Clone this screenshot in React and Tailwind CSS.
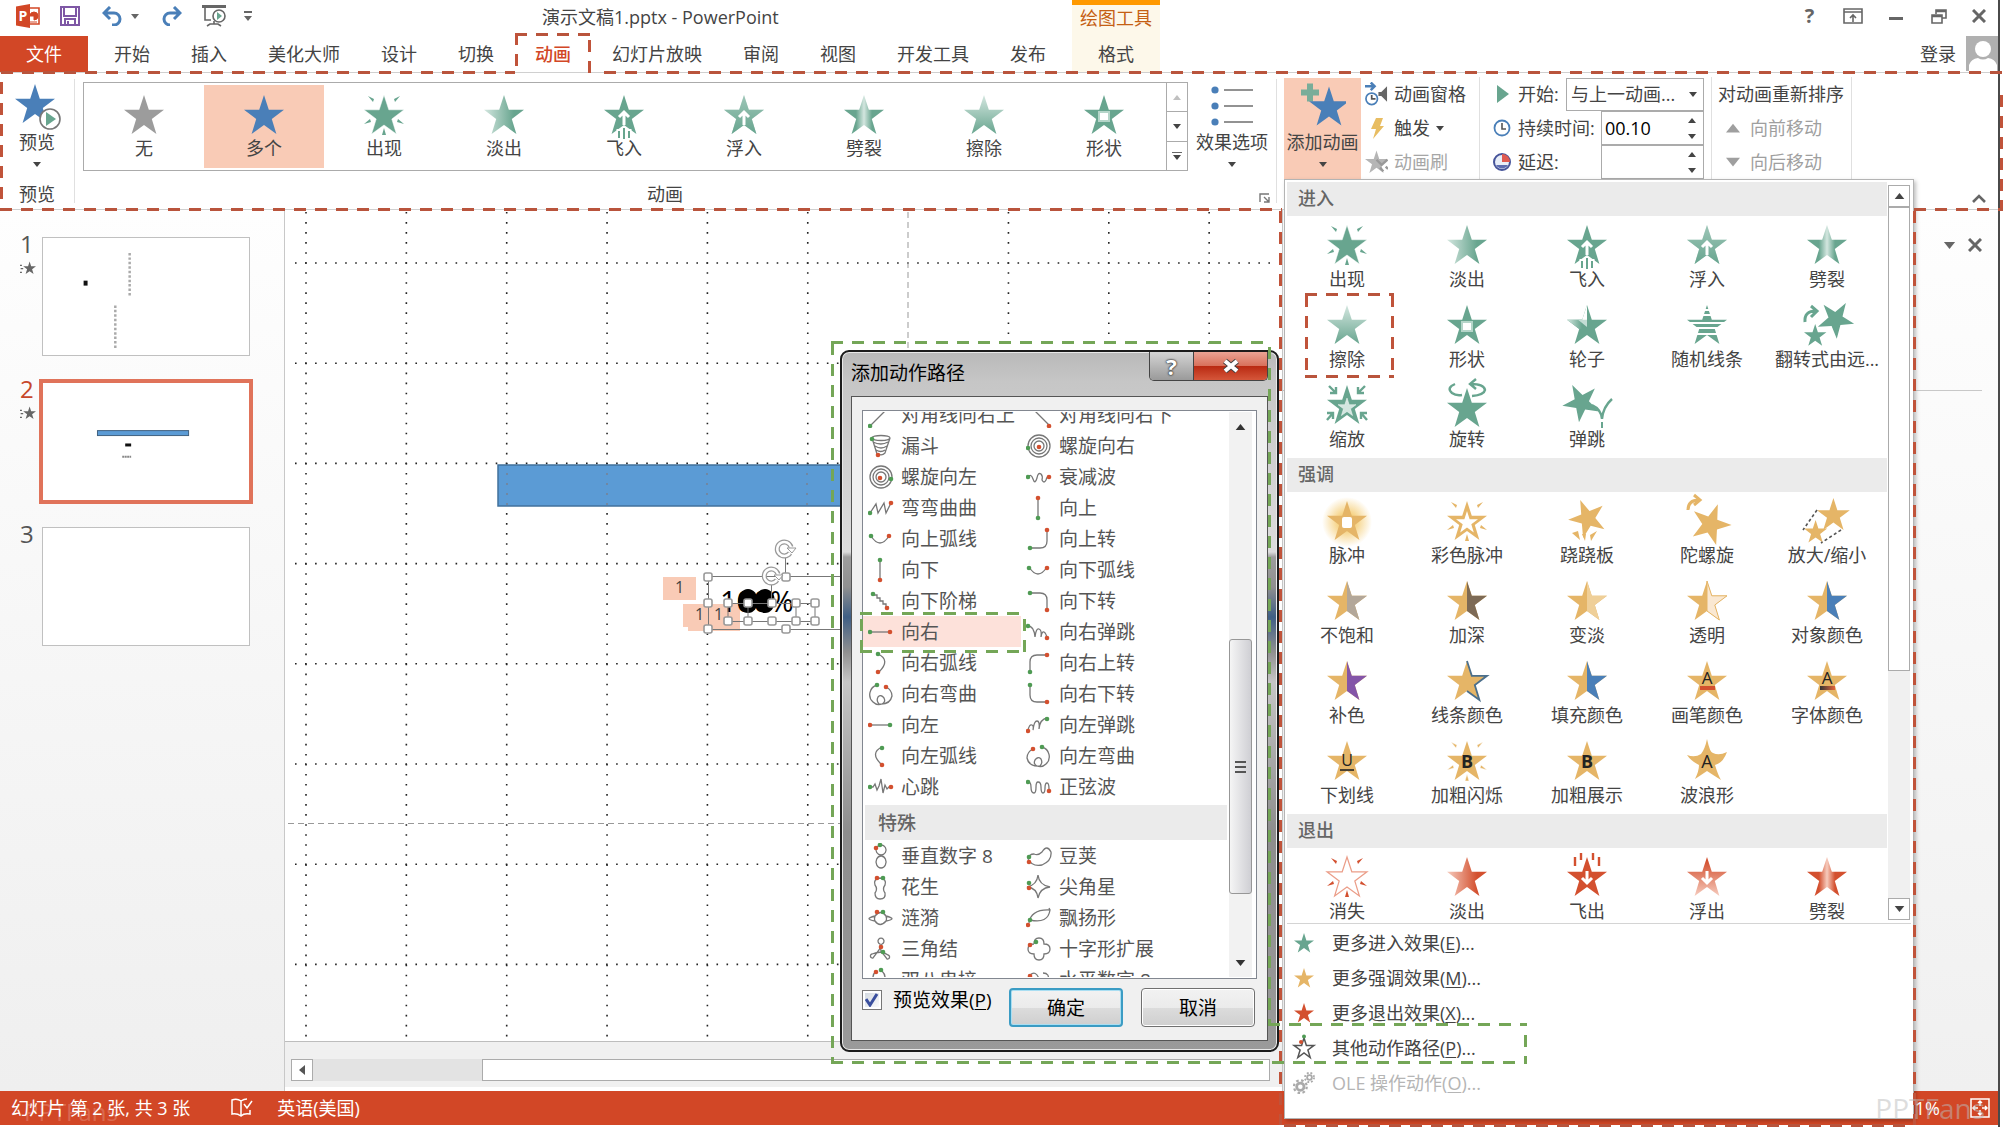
import { useState } from "react"
import { clsx } from "clsx"

const STAR = "M20 0 L24.8 14.8 L40 14.8 L27.8 24 L32.4 39 L20 30 L7.6 39 L12.2 24 L0 14.8 L15.2 14.8 Z"
const RIGHT_HALF = "M20 0 L24.8 14.8 L40 14.8 L27.8 24 L32.4 39 L20 30 Z"

const GREEN = "#68a58f"
const GOLD = "#e5b567"
const RED = "#d3502f"
const BLUE = "#4a7fb8"

const tabs = ["开始", "插入", "美化大师", "设计", "切换", "动画", "幻灯片放映", "审阅", "视图", "开发工具", "发布"]

const galleryItems = [
  { name: "无", kind: "plain", color: "#9c9c9c" },
  { name: "多个", kind: "plain", color: BLUE },
  { name: "出现", kind: "appear", color: GREEN },
  { name: "淡出", kind: "fade", color: GREEN },
  { name: "飞入", kind: "fly", color: GREEN },
  { name: "浮入", kind: "float", color: GREEN },
  { name: "劈裂", kind: "split", color: GREEN },
  { name: "擦除", kind: "wipe", color: GREEN },
  { name: "形状", kind: "shape", color: GREEN },
]

const menuSections = [
  {
    title: "进入",
    color: GREEN,
    items: [
      ["出现", "appear"],
      ["淡出", "fade"],
      ["飞入", "fly"],
      ["浮入", "float"],
      ["劈裂", "split"],
      ["擦除", "wipe"],
      ["形状", "shape"],
      ["轮子", "wheel"],
      ["随机线条", "bars"],
      ["翻转式由远...", "growTurn"],
      ["缩放", "zoom"],
      ["旋转", "swivel"],
      ["弹跳", "bounce"],
    ],
  },
  {
    title: "强调",
    color: GOLD,
    items: [
      ["脉冲", "pulse"],
      ["彩色脉冲", "colorPulse"],
      ["跷跷板", "teeter"],
      ["陀螺旋", "spin"],
      ["放大/缩小", "grow"],
      ["不饱和", "half", "#b3a799"],
      ["加深", "half", "#7d6a55"],
      ["变淡", "half", "#efcf98"],
      ["透明", "half", "#fae8d2"],
      ["对象颜色", "half", BLUE],
      ["补色", "half", "#8455a8"],
      ["线条颜色", "lineColor"],
      ["填充颜色", "half", BLUE],
      ["画笔颜色", "brush", "#d3502f"],
      ["字体颜色", "brush", "url(#g-font)"],
      ["下划线", "underline"],
      ["加粗闪烁", "boldFlash"],
      ["加粗展示", "bold"],
      ["波浪形", "wave"],
    ],
  },
  {
    title: "退出",
    color: RED,
    items: [
      ["消失", "vanish"],
      ["淡出", "fadeOut"],
      ["飞出", "flyOut"],
      ["浮出", "floatOut"],
      ["劈裂", "splitOut"],
    ],
  },
]

const menuCommands = [
  { label: "更多进入效果", hotkey: "E", color: GREEN },
  { label: "更多强调效果", hotkey: "M", color: GOLD },
  { label: "更多退出效果", hotkey: "X", color: RED },
  { label: "其他动作路径", hotkey: "P", outline: true },
  { label: "OLE 操作动作", hotkey: "O", disabled: true },
]

const rings = "M2 13a11 11 0 1 1 22 0a11 11 0 1 1 -22 0 M5 13a8 8 0 1 1 16 0a8 8 0 1 1 -16 0 M8 13a5 5 0 1 1 10 0a5 5 0 1 1 -10 0"

// d: path outline, g: start point (green), r: end point (red)
const basicPaths = [
  { name: "对角线向右上", d: "M2 24 L24 2", g: [2, 24], r: [24, 2] },
  { name: "对角线向右下", d: "M2 2 L24 24", g: [2, 2], r: [23, 24] },
  { name: "漏斗", d: "M4 5a9 2.500 0 1 0 18 0a9 2.500 0 1 0 -18 0 M5 9q8 4 15 0 M7 13q6 4 12 0 M8 17q5 3 9 0 M4 5l5 16 M22 5l-5 15q-3 3 -7 1", g: [4, 6], r: [10, 22] },
  { name: "螺旋向右", d: rings, g: [2, 15], r: [13, 14] },
  { name: "螺旋向左", d: rings, g: [23, 15], r: [12, 14] },
  { name: "衰减波", d: "M2 13q3 -4 5 2q2 6 4 -1q1 -6 4 -4q2 2 1 6q2 4 4 0q1 -4 3 -3", g: [2, 13], r: [23, 13] },
  { name: "弯弯曲曲", d: "M2 18 L8 9 L10 18 L16 8 L18 18 L23 8", g: [2, 18], r: [23, 8] },
  { name: "向上", d: "M12 24V3", g: [12, 23], r: [12, 3] },
  { name: "向上弧线", d: "M3 10q9 14 18 0", g: [3, 10], r: [21, 10] },
  { name: "向上转", d: "M4 22h10q7 0 7 -7V4", g: [4, 22], r: [21, 4] },
  { name: "向下", d: "M12 3v20", g: [12, 3], r: [12, 23] },
  { name: "向下弧线", d: "M3 10q9 14 18 0", g: [3, 11], r: [21, 11] },
  { name: "向下阶梯", d: "M5 7h4v3h3v3h3v3h3v3h2v2", g: [5, 6], r: [19, 20] },
  { name: "向下转", d: "M4 5h10q7 0 7 7v10", g: [4, 5], r: [21, 22] },
  { name: "向右", d: "M2 13h21", g: [2, 13], r: [22, 13] },
  { name: "向右弹跳", d: "M2 7q6 0 7 11q1 -9 4 -8q3 1 2 8q1 -6 3 -5q2 1 3 6", g: [2, 7], r: [21, 19] },
  { name: "向右弧线", d: "M10 4q13 6 1 18", g: [10, 4], r: [10, 22] },
  { name: "向右上转", d: "M4 22V12q0 -7 7 -7h10", g: [4, 22], r: [21, 5] },
  { name: "向右弯曲", d: "M9 4A10 10 0 0 0 5 21Q9 25 14 23Q18 21 16 17Q13 13 10 16Q8 20 11 23Q22 24 24 15Q24 9 18 6", g: [9, 4], r: [18, 6] },
  { name: "向右下转", d: "M4 4v10q0 7 7 7h10", g: [4, 4], r: [21, 21] },
  { name: "向左", d: "M2 13h21", g: [22, 13], r: [2, 13] },
  { name: "向左弹跳", d: "M2 19q1 -7 4 -6q2 1 1 5q1 -9 4 -9q3 0 2 8q1 -10 8 -11", g: [21, 7], r: [2, 19] },
  { name: "向左弧线", d: "M14 4q-13 6 0 18", g: [14, 5], r: [14, 22] },
  { name: "向左弯曲", d: "M16 4A10 10 0 0 1 20 21Q16 25 11 23Q7 21 9 17Q12 13 15 16Q17 20 14 23Q3 24 1 15Q1 9 7 6", g: [16, 4], r: [7, 6] },
  { name: "心跳", d: "M2 13h3l2 -3l2 6l2 -4l2 -7l2 14l2 -8l2 4l2 -2h3", g: [2, 13], r: [23, 13] },
  { name: "正弦波", d: "M2 8q3 0 3 5q0 6 3 6q2 0 2 -6q0 -5 2 -5q3 0 3 5q0 6 2 6q2 0 2 -5q0 -5 2 -5q2 0 2 6", g: [2, 8], r: [23, 17] },
]

const specialPaths = [
  { name: "垂直数字 8", d: "M13 2a5 5 0 1 0 .1 0 M13 13a5 6 0 1 0 .1 0", g: [12, 2], r: [8, 5] },
  { name: "豆荚", d: "M2 16q4 8 14 6q10 -4 9 -13q-4 -8 -9 0q-4 4 -8 2q-5 0 -6 5", g: [3, 14], r: [3, 19] },
  { name: "花生", d: "M12 4q-7 1 -5 7q3 4 0 8q0 6 5 6q6 0 5 -6q-3 -4 0 -8q2 -6 -5 -7", g: [15, 4], r: [9, 4] },
  { name: "尖角星", d: "M12 1q1 10 12 12q-10 1 -12 11q-1 -10 -11 -11q10 -2 11 -12", g: [3, 9], r: [3, 14] },
  { name: "涟漪", d: "M7 11q-12 3 0 5q5 7 11 0q12 -2 0 -5q-5 -7 -11 0q-1 3 0 5 M18 11q1 3 0 5", g: [15, 7], r: [9, 7] },
  { name: "飘扬形", d: "M3 18q2 -14 21 -13q-2 14 -20 10 M24 5l-1 -2", g: [4, 15], r: [2, 20] },
  { name: "三角结", d: "M12 8a3 3 0 1 1 2 0l-3 6l-6 8a2 2 0 1 1 -1 -4q10 -4 16 1a2 2 0 1 1 -1 4l-6 -8z", g: [15, 16], r: [13, 11] },
  { name: "十字形扩展", d: "M8 8q0 -6 5 -6t5 6q6 0 6 5t-6 5q0 6 -5 6t-5 -6q-6 0 -6 -5t6 -5", g: [10, 6], r: [4, 9] },
  { name: "双八串接", d: "M8 4q-6 6 0 12q6 6 0 9 M14 4q6 6 0 12", g: [13, 3], r: [8, 5] },
  { name: "水平数字 8", d: "M4 8q6 -5 9 4q3 8 9 2q2 -8 -5 -8", g: [4, 15], r: [4, 9] },
]

const rays = "M4 1l5 6l1 -3z M36 1l-5 6l-1 -3z M0 29l6 -5l1 3z M40 29l-6 -5l-1 3z M20 33l-2 7h4z"
const arrowUp = "M20 30V18 M15 22l5 -5l5 5"

function GradientDefs() {
  const sets = [
    ["green", "#68a58f", "#d3e6df"],
    ["red", "#d3502f", "#f6cbbd"],
  ]
  return (
    <svg width="0" height="0" className="absolute" aria-hidden="true">
      <defs>
        {sets.map(([id, dark, light]) => (
          <g key={id}>
            <linearGradient id={`g-${id}-h`}>
              <stop offset="0" stopColor={light} />
              <stop offset="0.75" stopColor={dark} />
            </linearGradient>
            <linearGradient id={`g-${id}-v`} x2="0" y2="1">
              <stop offset="0" stopColor={light} />
              <stop offset="1" stopColor={dark} />
            </linearGradient>
            <linearGradient id={`g-${id}-vr`} x2="0" y2="1">
              <stop offset="0.1" stopColor={dark} />
              <stop offset="1" stopColor={light} />
            </linearGradient>
            <linearGradient id={`g-${id}-s`}>
              <stop offset="0.3" stopColor={dark} />
              <stop offset="0.5" stopColor={light} />
              <stop offset="0.7" stopColor={dark} />
            </linearGradient>
          </g>
        ))}
        <linearGradient id="g-font">
          <stop offset="0" stopColor="#333" />
          <stop offset="1" stopColor="#e2653c" />
        </linearGradient>
        <radialGradient id="g-glow">
          <stop offset="0.3" stopColor="#f5cf7a" />
          <stop offset="1" stopColor="#f5cf7a" stopOpacity="0" />
        </radialGradient>
      </defs>
    </svg>
  )
}

function Letter({ children, bold, y = 27, size = 19 }) {
  return (
    <text x="20" y={y} textAnchor="middle" fontSize={size} fontWeight={bold ? 700 : 400} fill="#222" fontFamily="Open Sans, sans-serif">
      {children}
    </text>
  )
}

function EffectIcon({ kind, color, extra }) {
  const art = {
    plain: <path d={STAR} fill={color} />,
    appear: (
      <>
        <path d={STAR} fill={color} stroke="#fff" strokeWidth="0.5" />
        <path d={rays} fill={color} />
      </>
    ),
    fade: <path d={STAR} fill="url(#g-green-h)" />,
    fly: (
      <>
        <path d={STAR} fill={color} />
        <path d={arrowUp} stroke="#fff" strokeWidth="3" fill="none" />
        <path d="M20 32v11 M15 34v8 M25 34v8" stroke="#fff" strokeWidth="5" />
        <path d="M20 33v11 M15 36v7 M25 36v7" stroke={color} strokeWidth="2" />
      </>
    ),
    float: (
      <>
        <path d={STAR} fill="url(#g-green-v)" />
        <path d={STAR} fill={color} opacity="0.5" />
        <path d={arrowUp} stroke="#fff" strokeWidth="3" fill="none" />
      </>
    ),
    split: <path d={STAR} fill="url(#g-green-s)" />,
    wipe: <path d={STAR} fill="url(#g-green-v)" />,
    shape: (
      <>
        <path d={STAR} fill={color} />
        <rect x="15" y="17" width="10" height="9" fill="#fff" stroke="#b5d5c9" strokeWidth="2" />
      </>
    ),
    wheel: (
      <>
        <path d={STAR} fill={color} />
        <path d="M20 0V22L11 15L15.2 14.8Z" fill="#fff" />
        <path d="M0 14.8H15L20 17V23L12.2 24Z" fill="url(#g-green-h)" />
        <path d="M11 14.8H20V22Z" fill="#c4ddd4" />
      </>
    ),
    bars: (
      <>
        <path d={STAR} fill={color} />
        <path d="M0 5h40 M0 10h40 M0 18h40 M0 23h40 M0 29h40" stroke="#fff" strokeWidth="1.8" />
      </>
    ),
    growTurn: (
      <>
        <path d={STAR} fill={color} transform="translate(10 -4) rotate(32 20 20) scale(.9)" />
        <path d={STAR} fill={color} transform="translate(-3 19) scale(.56)" />
        <path d="M-2 17q-1 -11 11 -11 M4 1l6 5l-6 6" stroke={color} strokeWidth="3" fill="none" />
      </>
    ),
    zoom: (
      <>
        <path d={STAR} fill={color} />
        <path d={STAR} fill="#d3e6df" stroke="#fff" transform="translate(11 13) scale(.45)" />
        <path d="M2 1l7 7 M9 2v6H3 M38 1l-7 7 M31 2v6h6 M0 35l6 -7 M0 28h6v6 M40 35l-6 -7 M40 28h-6v6" stroke={color} strokeWidth="2.4" fill="none" />
      </>
    ),
    swivel: (
      <>
        <path d={STAR} fill={color} transform="translate(0 3)" />
        <path d="M8 -1q-9 4 -3 9q4 3 10 2 M25 11q12 -1 13 -6q-1 -6 -14 -6 M29 -6l-6 5l6 5" stroke={color} strokeWidth="2.4" fill="none" />
      </>
    ),
    bounce: (
      <>
        <path d={STAR} fill={color} transform="translate(-4 -3) rotate(-28 20 20) scale(.92)" />
        <path d="M25 20q9 4 10 14q1 -12 10 -20" stroke={color} strokeWidth="2.4" fill="none" />
        <path d="M35 37v6" stroke={color} strokeWidth="2" />
      </>
    ),
    pulse: (
      <>
        <circle cx="20" cy="21" r="25" fill="url(#g-glow)" />
        <path d={STAR} fill={color} />
        <rect x="15" y="16" width="10" height="11" rx="2" fill="#fff" />
      </>
    ),
    colorPulse: (
      <>
        <path d={STAR} fill={color} />
        <path d={STAR} fill="#fff" transform="translate(9 10) scale(.55)" />
        <path d={rays} fill={color} />
      </>
    ),
    teeter: (
      <>
        <path d={STAR} fill={color} transform="translate(2 -3) rotate(-22 20 20) scale(.93)" />
        <path d="M5 32l8 7l-2 -9z M15 33l3 7l1 -7z M30 30l-6 10l-1 -6z" fill={color} />
      </>
    ),
    spin: (
      <>
        <path d={STAR} fill={color} transform="translate(4 2) rotate(20 20 20)" />
        <path d="M1 9q0 -10 11 -10 M7 -6l6 5l-6 5" stroke={color} strokeWidth="3" fill="none" />
      </>
    ),
    grow: (
      <>
        <path d={STAR} fill={color} transform="translate(10 -3) scale(.82)" />
        <path d={STAR} fill={color} transform="translate(-3 19) scale(.58)" />
        <path d="M10 9L-4 29 M34 29L14 42" stroke="#555" strokeWidth="1.6" strokeDasharray="3 2.5" />
      </>
    ),
    half: (
      <>
        <path d={STAR} fill={color} />
        <path d={RIGHT_HALF} fill={extra} stroke={extra === "#fae8d2" ? color : "none"} />
      </>
    ),
    lineColor: (
      <>
        <path d={STAR} fill={color} />
        <path d="M20 0L24.8 14.8H40L27.8 24L32.4 39L20 30" fill="none" stroke="#4b6f8c" strokeWidth="1.8" />
      </>
    ),
    brush: (
      <>
        <path d={STAR} fill={color} />
        <Letter y={23} size={17}>A</Letter>
        <rect x="13" y="25" width="15" height="4" fill={extra} />
      </>
    ),
    underline: (
      <>
        <path d={STAR} fill={color} />
        <Letter y={25} size={16}>U</Letter>
        <path d="M13 29h14" stroke="#222" strokeWidth="1.6" />
      </>
    ),
    boldFlash: (
      <>
        <path d={STAR} fill={color} />
        <path d={rays} fill={color} stroke="#fff" strokeWidth="0.5" />
        <Letter bold size={18}>B</Letter>
      </>
    ),
    bold: (
      <>
        <path d={STAR} fill={color} />
        <Letter bold size={18}>B</Letter>
      </>
    ),
    wave: (
      <>
        <path d="M20 -2Q23 12 26 12Q32 15 40 11Q36 22 28 24Q31 34 34 39Q26 34 20 30L8 38Q12 30 12 24Q4 20 0 14Q8 17 14 13Q18 8 20 -2Z" fill={color} />
        <Letter size={18}>A</Letter>
      </>
    ),
    vanish: (
      <>
        <path d={STAR} fill="#fff" stroke="#eb9d88" strokeWidth="1.2" />
        <path d={rays} fill={color} />
      </>
    ),
    fadeOut: <path d={STAR} fill="url(#g-red-h)" />,
    flyOut: (
      <>
        <path d={STAR} fill={color} />
        <path d="M20 14v11 M15 21l5 5l5 -5" stroke="#fff" strokeWidth="3" fill="none" />
        <path d="M8 0v9 M14 -4v7 M26 -4v7 M32 0v9" stroke={color} strokeWidth="2.4" />
      </>
    ),
    floatOut: (
      <>
        <path d={STAR} fill="url(#g-red-vr)" />
        <path d="M20 14v11 M15 21l5 5l5 -5" stroke="#fff" strokeWidth="3" fill="none" />
      </>
    ),
    splitOut: <path d={STAR} fill="url(#g-red-s)" />,
  }
  return (
    <svg viewBox="0 0 40 40" className="size-10 overflow-visible" aria-hidden="true">
      {art[kind]}
    </svg>
  )
}

function Caret({ up, className }) {
  return (
    <svg viewBox="0 0 8 5" className={clsx("h-[5px] w-2", className)} fill="currentColor" aria-hidden="true">
      <path d={up ? "M0 5L4 0L8 5Z" : "M0 0H8L4 5Z"} />
    </svg>
  )
}

// Dashed marker lines, drawn over the window
function DashH({ green, className }) {
  return (
    <i
      className={clsx(
        "pointer-events-none absolute h-[3px]",
        green
          ? "bg-[repeating-linear-gradient(90deg,#74a657_0_12px,transparent_12px_21px)]"
          : "bg-[repeating-linear-gradient(90deg,#b9543c_0_12px,transparent_12px_21px)]",
        className
      )}
    />
  )
}

function DashV({ green, className }) {
  return (
    <i
      className={clsx(
        "pointer-events-none absolute w-[3px]",
        green
          ? "bg-[repeating-linear-gradient(180deg,#74a657_0_12px,transparent_12px_21px)]"
          : "bg-[repeating-linear-gradient(180deg,#c0533a_0_12px,transparent_12px_21px)]",
        className
      )}
    />
  )
}

function TitleBar() {
  return (
    <div className="flex h-9 items-start">
      <div className="flex h-8 items-center pl-4 text-[#4a7fb8]">
        <svg viewBox="0 0 24 24" className="size-6" aria-hidden="true">
          <path d="M11 4h12v16H11z" fill="#fff" stroke="#d24726" strokeWidth="1.6" />
          <path d="M14 12a4 4 0 1 1 4 4v-4z M13 18h8" fill="#d24726" stroke="#d24726" />
          <path d="M0 2.5L14 0v24L0 21.5z" fill="#d24726" />
          <text x="2.5" y="17" fontSize="14" fontWeight="700" fill="#fff" fontFamily="Open Sans, sans-serif">P</text>
        </svg>
        <button aria-label="保存" className="ml-5">
          <svg viewBox="0 0 20 20" className="size-5" fill="none" stroke="#7e57a5" strokeWidth="2">
            <path d="M1 1h18v18H1z M4 1v9h12V1 M5 19v-6h10v6 M8 15v4" />
          </svg>
        </button>
        <button aria-label="撤消" className="ml-[22px]">
          <svg viewBox="0 0 22 20" className="h-5 w-[22px]" fill="none" stroke="currentColor" strokeWidth="3">
            <path d="M3 7h9a6 6 0 0 1 0 12h-2 M8 1L2 7l6 6" />
          </svg>
        </button>
        <Caret className="ml-[7px] text-[#666]" />
        <button aria-label="恢复" className="ml-[21px]">
          <svg viewBox="0 0 22 20" className="h-5 w-[22px]" fill="none" stroke="currentColor" strokeWidth="3">
            <path d="M19 7h-9a6 6 0 0 0 0 12 M14 1l6 6l-6 6" />
          </svg>
        </button>
        <button aria-label="从头开始" className="ml-5">
          <svg viewBox="0 0 24 22" className="h-[22px] w-6" fill="none" stroke="#666" strokeWidth="1.6">
            <path d="M0 1.5h24" strokeWidth="3" />
            <path d="M3 3v12h6 M12 16v3 M5 21l3 -2h8l3 2" />
            <circle cx="17" cy="11" r="6" fill="#fff" />
            <path d="M15 7l5 4l-5 4z" fill="#68a58f" stroke="none" />
          </svg>
        </button>
        <button aria-label="自定义快速访问工具栏" className="ml-[18px] text-[#666]">
          <svg viewBox="0 0 8 10" className="h-[10px] w-2" fill="currentColor">
            <path d="M0 0h8v2H0z M0 5h8L4 10z" />
          </svg>
        </button>
      </div>
      <h1 className="ml-[290px] text-[18px] leading-[34px] text-[#444]">演示文稿1.pptx - PowerPoint</h1>
      <div className="ml-auto flex h-8 text-[#666]">
        <button aria-label="帮助" className="w-[43px] text-[20px] leading-8 font-bold">?</button>
        <button aria-label="功能区显示选项" className="grid w-[43px] place-items-center">
          <svg viewBox="0 0 20 16" className="h-4 w-5" fill="none" stroke="currentColor" strokeWidth="1.6">
            <path d="M1 1h18v14H1z M1 4h18 M10 14V7 M7 10l3 -3l3 3" />
          </svg>
        </button>
        <button aria-label="最小化" className="grid w-[43px] place-items-center">
          <span className="mt-1 h-[3px] w-[14px] bg-[#666]" />
        </button>
        <button aria-label="还原" className="grid w-[43px] place-items-center">
          <svg viewBox="0 0 16 15" className="h-[15px] w-4" fill="none" stroke="currentColor" strokeWidth="1.6">
            <path d="M5 5V1h10v8h-4 M5 2.5h10 M1 6h10v8H1z M1 7.5h10" />
          </svg>
        </button>
        <button aria-label="关闭" className="grid w-[38px] place-items-center">
          <svg viewBox="0 0 14 14" className="size-[14px]" stroke="currentColor" strokeWidth="3">
            <path d="M1 1L13 13M13 1L1 13" />
          </svg>
        </button>
      </div>
    </div>
  )
}

function TabBar() {
  return (
    <nav className="flex h-[37px] border-b border-[#d0d0d0] text-[18px] leading-[34px] text-[#444]">
      <button className="w-[88px] bg-[#d24726] text-white">文件</button>
      <div className="flex gap-px pl-[6px]">
        {tabs.map((tab) =>
          tab === "动画" ? (
            <button key={tab} className="relative px-5 font-medium text-[#d24726]">
              {tab}
              <DashH className="top-[-3px] left-0 w-[78px]" />
              <DashV className="top-[-3px] left-0 h-10" />
              <DashV className="top-[4px] right-0 h-9" />
            </button>
          ) : (
            <button key={tab} className="px-5">
              {tab}
            </button>
          )
        )}
      </div>
      <button className="relative ml-[6px] w-[88px] bg-[#fdf8ea]">
        <span className="absolute -top-9 left-0 h-9 w-full border-t-[5px] border-[#ff9900] bg-[#fdf8ea] leading-[27px] text-[#c55f14]">
          绘图工具
        </span>
        格式
      </button>
      <button className="ml-auto pr-[10px]">登录</button>
      <svg viewBox="0 0 32 35" className="h-[35px] w-8" aria-label="账户">
        <path d="M0 0h32v35H0z" fill="#b0b0b0" />
        <circle cx="17" cy="13" r="8" fill="#fff" />
        <path d="M3 35v-6q2 -6 9 -7q5 3 10 0q7 1 9 7v6z" fill="#fff" />
      </svg>
    </nav>
  )
}

function Ribbon() {
  return (
    <section className="flex h-[137px] border-b border-[#d0d0d0] bg-white text-[18px] leading-6 text-[#444]">
      <div className="my-[6px] flex w-[75px] flex-col border-r border-[#e0e0e0] text-center">
        <button className="flex h-[94px] flex-col items-center pt-[5px]">
          <svg viewBox="0 0 46 46" className="ml-[2px] h-[46px] w-[46px]" aria-hidden="true">
            <path d={STAR} fill={BLUE} />
            <circle cx="35" cy="35" r="10" fill="#fff" stroke="#777" strokeWidth="1.6" />
            <path d="M31 28l10 7l-10 7z" fill={GREEN} />
          </svg>
          <span>预览</span>
          <Caret className="mt-[8px]" />
        </button>
        <span className="mt-auto leading-[18px]">预览</span>
      </div>

      <div className="my-[6px] flex flex-col border-r border-[#e0e0e0] pr-[3px] pl-2">
        <div className="flex">
          <div className="mt-[3px] flex h-[89px] border border-[#ababab]">
            {galleryItems.map((item) => (
              <button
                key={item.name}
                className={clsx("my-[2px] flex w-[120px] flex-col items-center pt-[10px]", item.name === "多个" && "bg-[#f9cbb6]")}
              >
                <EffectIcon kind={item.kind} color={item.color} />
                <span className="mt-px">{item.name}</span>
              </button>
            ))}
            <div className="ml-[2px] flex w-[21px] flex-col border-l border-[#ababab]">
              <button aria-label="上一行" className="grid flex-1 place-items-center border-b border-[#ababab] text-[#c0c0c0]"><Caret up /></button>
              <button aria-label="下一行" className="grid flex-1 place-items-center border-b border-[#ababab]"><Caret /></button>
              <button aria-label="其他" className="flex flex-1 flex-col items-center justify-center gap-[2px]">
                <i className="h-px w-[10px] bg-[#666]" />
                <Caret />
              </button>
            </div>
          </div>
          <button className="ml-[3px] flex w-[82px] flex-col items-center pt-[5px]">
            <svg viewBox="0 0 42 42" className="h-[46px] w-[42px]" aria-hidden="true">
              {[4, 20, 36].map((y) => (
                <g key={y}>
                  <circle cx="4" cy={y} r="3.6" fill={BLUE} />
                  <path d={`M13 ${y}h29`} stroke="#777" strokeWidth="1.6" />
                </g>
              ))}
            </svg>
            <span>效果选项</span>
            <Caret className="mt-[8px]" />
          </button>
        </div>
        <div className="mt-auto flex items-end leading-[18px]">
          <span className="flex-1 pr-3 text-center">动画</span>
          <button aria-label="动画选项" className="mr-[3px]">
            <svg viewBox="0 0 11 10" className="h-[10px] w-[11px]" fill="none" stroke="#777" strokeWidth="1.4">
              <path d="M1 9V1h9 M5 4l5 5 M10 4v5H5" />
            </svg>
          </button>
        </div>
      </div>

      <div className="relative mt-[5px] ml-[7px] h-[101px]">
        <button className="flex h-full w-[77px] flex-col items-center bg-[#f9cbb6] pt-[5px]">
          <svg viewBox="0 0 46 46" className="h-[47px] w-[46px]" aria-hidden="true">
            <path d="M7 0h6v6h6v6h-6v6H7v-6H1V6h6z" fill="#79ad99" />
            <path d={STAR} fill={BLUE} transform="translate(9 3)" />
          </svg>
          <span>添加动画</span>
          <Caret className="mt-[8px]" />
        </button>
        <AnimationMenu />
      </div>

      <div className="my-1 flex h-[102px] w-[119px] flex-col border-r border-[#e0e0e0] pl-1">
        <button className="flex h-[34px] items-center gap-[6px]">
          <svg viewBox="0 0 24 24" className="h-6 w-[23px]" fill="none" stroke={BLUE} strokeWidth="1.8" aria-hidden="true">
            <path d="M0 4h8 M6 0l4 4l-4 4" strokeWidth="2.6" />
            <circle cx="7" cy="17" r="6" fill="#fff" />
            <path d="M7 13v4h4" stroke="#555" />
            <path d="M14 10h3l6 -6v16l-6 -6h-3z" fill="#666" stroke="none" />
          </svg>
          动画窗格
        </button>
        <button className="flex h-[34px] items-center gap-[6px]">
          <svg viewBox="0 0 23 24" className="h-6 w-[23px]" fill="#e8bd62" aria-hidden="true">
            <path d="M11 2h7l-3 8h4L8 23l3 -10H6z" />
          </svg>
          触发 <Caret />
        </button>
        <button disabled className="flex h-[34px] items-center gap-[6px] text-[#a6a6a6]">
          <svg viewBox="0 0 40 40" className="h-6 w-[23px]" aria-hidden="true">
            <path d={STAR} fill="#b5b5b5" />
            <path d="M20 16l9 9l10 -9 M26 30l6 6 M36 28l4 4" stroke="#999" strokeWidth="4" fill="none" />
          </svg>
          动画刷
        </button>
      </div>

      <div className="my-1 flex h-[102px] w-[232px] flex-col border-r border-[#e0e0e0] pr-[7px] pl-[13px]">
        <div className="flex h-[34px] items-center">
          <svg viewBox="0 0 18 18" className="size-[18px]" aria-hidden="true"><path d="M4 0l12 9l-12 9z" fill={GREEN} /></svg>
          <label htmlFor="start" className="ml-[7px]">开始:</label>
          <div className="relative ml-auto">
            <select id="start" className="h-[33px] w-[138px] appearance-none border border-[#ababab] bg-white pl-1 text-[18px] leading-6">
              <option>与上一动画...</option>
            </select>
            <Caret className="absolute top-[14px] right-[7px]" />
          </div>
        </div>
        <div className="flex h-[34px] items-center">
          <svg viewBox="0 0 18 18" className="size-[18px]" fill="none" aria-hidden="true">
            <circle cx="9" cy="9" r="7.5" stroke={BLUE} strokeWidth="1.8" />
            <path d="M9 4v6h4" stroke="#555" strokeWidth="1.6" />
          </svg>
          <label htmlFor="duration" className="ml-[7px]">持续时间:</label>
          <Spinner id="duration" value="00.10" />
        </div>
        <div className="flex h-[34px] items-center">
          <svg viewBox="0 0 18 18" className="size-[18px]" aria-hidden="true">
            <circle cx="9" cy="9" r="8" fill="#e8eef8" stroke="#46549a" strokeWidth="2" />
            <path d="M9 9V1a8 8 0 0 1 8 8z" fill="#e05a50" />
            <path d="M3 12a7 7 0 0 0 12 0z" fill="#5d6cb0" />
          </svg>
          <label htmlFor="delay" className="ml-[7px]">延迟:</label>
          <Spinner id="delay" value="" />
        </div>
      </div>

      <div className="my-1 flex h-[102px] w-[140px] flex-col border-r border-[#e0e0e0] pl-[6px]">
        <span className="leading-[34px]">对动画重新排序</span>
        <button disabled className="flex h-[34px] items-center gap-[10px] pl-2 text-[#9f9f9f]">
          <Caret up className="h-[10px]! w-[14px]!" />向前移动
        </button>
        <button disabled className="flex h-[34px] items-center gap-[10px] pl-2 text-[#9f9f9f]">
          <Caret className="h-[10px]! w-[14px]!" />向后移动
        </button>
      </div>

      <button aria-label="折叠功能区" className="mt-auto mr-3 mb-[6px] ml-auto">
        <svg viewBox="0 0 14 9" className="h-[9px] w-[14px]" fill="none" stroke="#666" strokeWidth="2.6">
          <path d="M1 8l6 -6l6 6" />
        </svg>
      </button>
    </section>
  )
}

function Spinner({ id, value }) {
  const [text, setText] = useState(value)
  return (
    <div className="ml-auto flex h-[34px] w-[103px] border border-[#ababab]">
      <input id={id} value={text} onChange={(e) => setText(e.target.value)} className="w-20 pl-[3px] text-[18px] text-black outline-none" />
      <div className="flex flex-col">
        <button aria-label="增加" className="grid h-4 w-5 place-items-center"><Caret up /></button>
        <button aria-label="减少" className="grid h-4 w-5 place-items-center"><Caret /></button>
      </div>
    </div>
  )
}

function AnimationMenu() {
  return (
    <div className="absolute top-full left-0 z-20 w-[630px] border border-[#b4b4b4] bg-white p-[2px] shadow-[2px_2px_4px_rgba(0,0,0,0.25)]">
      <div className="flex h-[742px] border-b border-[#d4d4d4]">
        <div className="w-[600px] overflow-hidden">
          {menuSections.map((section) => (
            <section key={section.title}>
              <h2 className="h-[34px] bg-[#ebebeb] pl-[11px] leading-8 font-medium text-[#666]">{section.title}</h2>
              <div className="grid grid-cols-5 py-px">
                {section.items.map(([name, kind, extra]) => (
                  <button key={name} className="relative flex h-20 flex-col items-center pt-2 whitespace-nowrap">
                    <EffectIcon kind={kind} color={section.color} extra={extra} />
                    <span className="mt-[2px]">{name}</span>
                    {name === "擦除" && (
                      <>
                        <DashH className="top-[-4px] left-[18px] w-[89px]" />
                        <DashH className="top-[78px] left-[18px] w-[89px]" />
                        <DashV className="top-[-2px] left-[18px] h-[82px]" />
                        <DashV className="top-[-2px] left-[104px] h-[82px]" />
                      </>
                    )}
                  </button>
                ))}
              </div>
            </section>
          ))}
        </div>
        <div className="my-[3px] ml-px flex w-[22px] flex-col bg-[#f0f0f0]">
          <button aria-label="向上滚动" className="grid h-[22px] place-items-center border border-[#ababab] bg-white">
            <Caret up className="h-[6px]! w-[11px]!" />
          </button>
          <div className="h-[464px] border border-[#ababab] bg-white" />
          <button aria-label="向下滚动" className="mt-auto grid h-[22px] place-items-center border border-[#ababab] bg-white">
            <Caret className="h-[6px]! w-[11px]!" />
          </button>
        </div>
      </div>
      <ul className="pt-px pb-4">
        {menuCommands.map((cmd) => (
          <li key={cmd.label}>
            <button disabled={cmd.disabled} className="flex h-[35px] w-full items-center gap-[17px] pl-[6px] disabled:text-[#b5b5b5]">
              {cmd.disabled ? (
                <svg viewBox="0 0 24 24" className="size-[22px]" fill="none" stroke="#aaa" aria-hidden="true">
                  <circle cx="8" cy="16" r="4" strokeWidth="3" />
                  <circle cx="8" cy="16" r="7" strokeWidth="2.4" strokeDasharray="2.8 2.7" />
                  <circle cx="18" cy="6" r="2.6" strokeWidth="2" />
                  <circle cx="18" cy="6" r="5" strokeWidth="2" strokeDasharray="2 2" />
                </svg>
              ) : (
                <svg viewBox="-2 -2 44 44" className="size-[22px] overflow-visible" aria-hidden="true">
                  <path d={STAR} fill={cmd.outline ? "#fff" : cmd.color} stroke={cmd.outline ? "#555" : "none"} strokeWidth="3" />
                  {cmd.outline && (
                    <>
                      <circle cx="20" cy="-3" r="4" fill="#4f9b54" />
                      <circle cx="14" cy="8" r="4" fill="#d3502f" />
                    </>
                  )}
                </svg>
              )}
              <span>{cmd.label}(<u className="underline-offset-2">{cmd.hotkey}</u>)...</span>
            </button>
          </li>
        ))}
      </ul>
    </div>
  )
}

function Thumbnail({ number, active, animated, children }) {
  return (
    <li className="flex">
      <div className={clsx("w-[42px] pl-5 text-[24px] leading-[14px]", active ? "text-[#c7472c]" : "text-[#555]")}>
        {number}
        {animated && (
          <svg viewBox="-10 0 50 40" className="mt-[10px] h-[14px] w-4 overflow-visible" fill="#666" aria-hidden="true">
            <path d={STAR} />
            <path d="M-10 10h6v4h-6z M-8 20h8v4h-8z M-10 32h6v4h-6z" />
          </svg>
        )}
      </div>
      <button
        aria-label={`幻灯片 ${number}`}
        className={clsx("relative h-[119px] w-[208px] border border-[#c0c0c0] bg-white", active && "outline-4 -outline-offset-1 outline-[#e0735a]")}
      >
        {children}
      </button>
    </li>
  )
}

function SlidePanel() {
  return (
    <aside className="w-[285px] border-r border-[#c8c8c8] bg-linear-to-b from-[#fefefe] to-[#efefef] pt-[27px]">
      <ol className="flex flex-col gap-[26px]">
        <Thumbnail number={1} animated>
          <svg viewBox="0 0 208 118" className="h-full w-full" aria-hidden="true">
            <rect x="41" y="43" width="4" height="5" fill="#111" />
            <path d="M87.500 15v43 M73 68v43" stroke="#aaa" strokeWidth="2.500" strokeDasharray="2.500 2" />
          </svg>
        </Thumbnail>
        <Thumbnail number={2} active animated>
          <svg viewBox="0 0 208 118" className="h-full w-full" aria-hidden="true">
            <rect x="55" y="48" width="92" height="5" fill="#5b9bd5" stroke="#41617f" />
            <rect x="83" y="61" width="6" height="3" fill="#111" />
            <path d="M80 74.500h9" stroke="#888" strokeWidth="2" strokeDasharray="2 .5" />
          </svg>
        </Thumbnail>
        <Thumbnail number={3} />
      </ol>
    </aside>
  )
}

function Handle({ x, y }) {
  return <rect x={x - 4} y={y - 4} width="8" height="8" rx="2" fill="#fff" stroke="#999" strokeWidth="1.6" />
}

function RotateHandle({ x, y }) {
  return (
    <g transform={`translate(${x} ${y})`} fill="none">
      <path d="M7 -2a7 7 0 1 0 -1 6" stroke="#999" strokeWidth="5" />
      <path d="M7 -2a7 7 0 1 0 -1 6" stroke="#fff" strokeWidth="2.500" />
      <path d="M3 -1h9l-4 5z" fill="#fff" stroke="#999" />
    </g>
  )
}

function SlideCanvas() {
  const columns = Array.from({ length: 10 }, (_, i) => 21 + i * 100.35)
  const rows = Array.from({ length: 8 }, (_, i) => 53 + i * 100.2)
  return (
    <svg className="h-full w-full" fontFamily="Open Sans, sans-serif" role="img" aria-label="幻灯片 2">
      <g stroke="#222" strokeWidth="1.600" strokeDasharray="1.600 8.435">
        {columns.map((x, i) => i !== 6 && <path key={x} d={`M${x} 2V832`} />)}
        {rows.map((y) => <path key={y} d={`M10 ${y}H990`} />)}
      </g>
      <path d="M623 2V832 M3 613.500H995" stroke="#999" strokeDasharray="6 4" />
      <rect x="213" y="255" width="700" height="41" fill="#5b9bd5" stroke="#41719c" strokeWidth="1.500" />
      <path d="M222 263V296 M322 263V296 M422 263V296 M522 263V296" stroke="#6f87a3" strokeWidth="2" strokeDasharray="2 8" />

      <g fill="#f9cbb6">
        <rect x="378" y="367" width="33" height="23" />
        <rect x="398" y="394" width="40" height="23" />
        <rect x="403" y="394" width="52" height="27" />
      </g>
      <g fontSize="16" fill="#444">
        <text x="390" y="383">1</text>
        <text x="410" y="410">1</text>
        <text x="429" y="410">1</text>
      </g>
      <text x="435" y="402" fontSize="29">100%</text>
      <ellipse cx="463" cy="391" rx="10" ry="12" />
      <ellipse cx="480" cy="391" rx="10" ry="12" />
      <g fill="none" stroke="#777">
        <path d="M560 366.500H423.500V419.500H560 M443 393.500H530V411.500H443Z M463 393.500V411.500 M511 393.500V411.500 M500.500 345V366 M486.500 372V393" />
      </g>
      {[[423, 367], [501, 367], [423, 393], [423, 419], [501, 419]].map(([x, y]) => <Handle key={`${x}-${y}`} x={x} y={y} />)}
      {[443, 463, 487, 511, 530].map((x) => (
        <g key={x}>
          <Handle x={x} y={393} />
          <Handle x={x} y={411} />
        </g>
      ))}
      <RotateHandle x={499} y={339} />
      <RotateHandle x={486} y={366} />
    </svg>
  )
}

function PathItem({ path, selected, onSelect }) {
  return (
    <button
      onClick={onSelect}
      className={clsx("relative flex h-[31px] items-center gap-[7px] pl-[5px] whitespace-nowrap", selected && "bg-[#fde1da]")}
    >
      <svg viewBox="0 0 26 26" className="size-[26px]" fill="none" aria-hidden="true">
        <path d={path.d} stroke="#777" strokeWidth="1.300" />
        <circle cx={path.g[0]} cy={path.g[1]} r="2.300" fill="#4f9b54" />
        <circle cx={path.r[0]} cy={path.r[1]} r="2.300" fill="#d3502f" />
      </svg>
      {path.name}
    </button>
  )
}

function MotionPathDialog() {
  const [selected, setSelected] = useState("向右")
  const [preview, setPreview] = useState(true)

  const renderPath = (path) => (
    <PathItem key={path.name} path={path} selected={selected === path.name} onSelect={() => setSelected(path.name)} />
  )

  return (
    <div
      role="dialog"
      aria-label="添加动作路径"
      className="absolute top-[350px] left-[840px] z-30 w-[439px] rounded-[9px] border-2 border-[#1c1c1c] bg-[linear-gradient(180deg,#b9b9b9_0,#c6c6c6_30px,#dcdcdc_200px,#9d9d9d_205px,#909090_235px,#3f5f85_265px,#909090_300px,#c5c5c5_330px,#8d8d8d_480px,#9a9a9a_100%)] px-[9px] pb-[9px] text-[19px] leading-6 text-[#555] shadow-[inset_0_0_0_1px_#e8e8e8]"
    >
      <div className="flex h-[44px] items-start">
        <h2 className="leading-[42px] text-black">添加动作路径</h2>
        <div className="ml-auto flex h-[29px] overflow-hidden rounded-b-[5px] border border-t-0 border-[#444]">
          <button aria-label="帮助" className="w-[44px] border-r border-[#444] bg-linear-to-b from-[#d5d5d5] to-[#9a9a9a] text-[22px] leading-[26px] font-bold text-white [text-shadow:0_0_2px_#222,0_0_2px_#222]">
            ?
          </button>
          <button aria-label="关闭" className="grid w-[73px] place-items-center bg-[linear-gradient(#e9a394_0,#d8705a_50%,#b92a12_51%,#d5563a_100%)]">
            <svg viewBox="0 0 18 16" className="h-4 w-[18px]">
              <path d="M3 3L15 13M15 3L3 13" stroke="#444" strokeWidth="6" />
              <path d="M3 3L15 13M15 3L3 13" stroke="#fff" strokeWidth="4" />
            </svg>
          </button>
        </div>
      </div>
      <div className="border border-[#555] bg-[#f0f0f0] px-[10px] py-[13px]">
        <div className="flex h-[569px] overflow-hidden border border-[#828790] bg-white py-px">
          <div className="flex-1 overflow-hidden">
            <div className="-mt-[13px] grid grid-cols-[158px_1fr]">{basicPaths.map(renderPath)}</div>
            <h3 className="mt-[3px] mr-[2px] ml-[2px] h-[35px] bg-[#ebebeb] pl-[13px] leading-[36px] font-medium text-[#666]">特殊</h3>
            <div className="grid grid-cols-[158px_1fr]">{specialPaths.map(renderPath)}</div>
          </div>
          <div className="mr-1 flex w-[23px] flex-col items-center bg-[#f2f2f2]">
            <button aria-label="向上滚动" className="h-[29px] text-[#333]"><Caret up className="h-[6px]! w-[11px]!" /></button>
            <div className="mt-[198px] flex h-[255px] w-full flex-col items-center justify-center gap-[3px] rounded-[3px] border border-[#979797] bg-linear-to-r from-[#f5f5f5] to-[#cfcfd4]">
              <i className="h-[2px] w-[11px] bg-[#555]" />
              <i className="h-[2px] w-[11px] bg-[#555]" />
              <i className="h-[2px] w-[11px] bg-[#555]" />
            </div>
            <button aria-label="向下滚动" className="mt-auto h-[28px] text-[#333]"><Caret className="h-[6px]! w-[11px]!" /></button>
          </div>
        </div>
        <div className="mt-[9px] flex pr-[2px] text-black">
          <label className="relative flex h-6 items-center gap-[11px]">
            <input
              type="checkbox"
              checked={preview}
              onChange={() => setPreview(!preview)}
              className="size-5 appearance-none border border-[#777] bg-linear-to-br from-[#cfd6de] to-white ring-2 ring-white ring-inset"
            />
            {preview && (
              <svg viewBox="0 0 14 14" className="pointer-events-none absolute top-[5px] left-[3px] size-[14px]" fill="none" stroke="#3a4f9e" strokeWidth="3">
                <path d="M1 6l4 6l7 -11" />
              </svg>
            )}
            <span>预览效果(<u className="underline-offset-2">P</u>)</span>
          </label>
          <button className="ml-auto h-[39px] w-[114px] rounded-[4px] border-2 border-[#3b9cc4] bg-[linear-gradient(#f2f2f2_0,#ebebeb_50%,#dcdcdc_51%,#cfcfcf_100%)] shadow-[inset_0_0_0_1px_#a9def2]">
            确定
          </button>
          <button className="ml-[18px] h-[39px] w-[114px] rounded-[4px] border border-[#707070] bg-[linear-gradient(#f2f2f2_0,#ebebeb_50%,#dcdcdc_51%,#cfcfcf_100%)] shadow-[inset_0_0_0_1px_#fff]">
            取消
          </button>
        </div>
      </div>
    </div>
  )
}

function AnimationPane() {
  return (
    <aside className="w-[716px] border-l border-[#c8c8c8] bg-linear-to-b from-[#fefefe] to-[#f0f0f0]">
      <div className="mr-4 flex h-[181px] justify-end gap-3 border-b border-[#c8c8c8] pt-[28px] text-[#666]">
        <button aria-label="任务窗格选项" className="h-[14px]"><Caret className="h-[7px]! w-[13px]!" /></button>
        <button aria-label="关闭窗格" className="h-[14px]">
          <svg viewBox="0 0 14 14" className="size-[14px]" stroke="currentColor" strokeWidth="3">
            <path d="M1 1L13 13M13 1L1 13" />
          </svg>
        </button>
      </div>
    </aside>
  )
}

function StatusBar() {
  return (
    <footer className="relative mb-[2px] flex h-[34px] items-center bg-[#d24726] text-[18px] leading-6 text-white">
      <span className="ml-[11px]">幻灯片 第 2 张, 共 3 张</span>
      <svg viewBox="0 0 22 20" className="ml-[41px] h-5 w-[22px]" fill="none" stroke="currentColor" strokeWidth="1.500" aria-hidden="true">
        <path d="M10 18V3q-4 -3 -9 -1v14q5 -1 9 2q3 -3 9 -2v-4 M10 3q3 -2 6 -2 M13 6l3 4l5 -7" />
      </svg>
      <span className="ml-6">英语(美国)</span>
      <span aria-hidden="true" className="absolute top-[9px] left-6 text-[24px] text-white/20">PPTFans</span>
      <span className="ml-auto">71%</span>
      <button aria-label="使幻灯片适应当前窗口" className="mr-2 ml-[30px]">
        <svg viewBox="0 0 20 20" className="size-5" fill="none" stroke="currentColor" strokeWidth="1.500">
          <path d="M1 1h18v18H1z M10 3v5 M8 5l2 -2l2 2 M10 17v-5 M8 15l2 2l2 -2 M3 10h5 M5 8l-2 2l2 2 M17 10h-5 M15 8l2 2l-2 2" />
        </svg>
      </button>
    </footer>
  )
}

export default function App() {
  return (
    <div className="relative flex min-h-screen flex-col overflow-hidden bg-white pr-[3px] font-['Open_Sans','Noto_Sans_CJK_SC',sans-serif]">
      <GradientDefs />
      <div className="flex flex-1 flex-col border-r-2 border-[#4a4a4a]">
        <TitleBar />
        <TabBar />
        <Ribbon />
        <main className="flex flex-1">
          <SlidePanel />
          <div className="flex min-w-0 flex-1 flex-col bg-[#f0f0f0]">
            <div className="min-h-0 flex-1 overflow-hidden border-b border-[#bdbdbd] bg-white">
              <SlideCanvas />
            </div>
            <div className="flex h-[49px] items-end border-b-4 border-white pr-3 pb-[6px] pl-[6px]">
              <button aria-label="向左滚动" className="grid h-[22px] w-[22px] place-items-center border border-[#ababab] bg-white">
                <svg viewBox="0 0 6 10" className="h-[10px] w-[6px]" fill="#555"><path d="M6 0v10L0 5z" /></svg>
              </button>
              <div className="h-[22px] flex-1 bg-[#e3e3e3] pl-[169px]">
                <div className="h-full border border-[#ababab] bg-white" />
              </div>
            </div>
          </div>
          <AnimationPane />
        </main>
        <StatusBar />
      </div>

      <MotionPathDialog />

      <div aria-hidden="true" className="pointer-events-none absolute inset-0 z-40">
        <DashH className="top-[71px] left-[1px] w-[514px]" />
        <DashH className="top-[71px] right-0 left-[604px]" />
        <DashV className="top-[82px] left-0 h-[124px]" />
        <DashV className="top-[95px] right-0 h-[114px]" />
        <DashH className="top-[208px] left-0 w-[1282px]" />
        <DashH className="top-[208px] right-0 left-[1914px]" />
        <DashV className="top-[211px] left-[1279px] h-[914px]" />
        <DashV className="top-[211px] left-[1913px] h-[914px]" />
        <DashH className="bottom-0 left-[1284px] w-[630px]" />

        <DashH green className="top-[341px] left-[831px] w-[438px]" />
        <DashV green className="top-[343px] left-[831px] h-[720px]" />
        <DashH green className="top-[1061px] left-[831px] w-[696px]" />
        <DashV green className="top-[347px] left-[1268px] h-[678px]" />
        <DashH green className="top-[1023px] left-[1268px] w-[259px]" />
        <DashV green className="top-[1035px] left-[1524px] h-[29px]" />
        <DashH green className="top-[612px] left-[860px] w-[166px]" />
        <DashH green className="top-[650px] left-[860px] w-[166px]" />
        <DashV green className="top-[619px] left-[860px] h-[33px]" />
        <DashV green className="top-[619px] left-[1023px] h-[33px]" />
        <span className="absolute right-[18px] bottom-[3px] text-[28px] leading-[32px] text-[#bbb]/50">PPTFans</span>
      </div>
    </div>
  )
}
